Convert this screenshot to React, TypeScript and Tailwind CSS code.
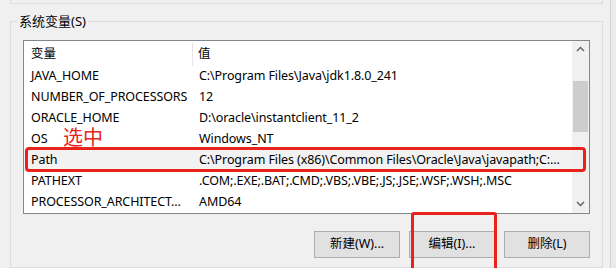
import React from "react";

const rows: [string, string][] = [
  ["JAVA_HOME", "C:\\Program Files\\Java\\jdk1.8.0_241"],
  ["NUMBER_OF_PROCESSORS", "12"],
  ["ORACLE_HOME", "D:\\oracle\\instantclient_11_2"],
  ["OS", "Windows_NT"],
  ["Path", "C:\\Program Files (x86)\\Common Files\\Oracle\\Java\\javapath;C:..."],
  ["PATHEXT", ".COM;.EXE;.BAT;.CMD;.VBS;.VBE;.JS;.JSE;.WSF;.WSH;.MSC"],
  ["PROCESSOR_ARCHITECT...", "AMD64"],
];

function Chevron({ up }: { up: boolean }) {
  return (
    <svg width="9" height="6" viewBox="0 0 9 6">
      <path
        d={up ? "M1 5 L4.5 1.5 L8 5" : "M1 1 L4.5 4.5 L8 1"}
        fill="none"
        stroke="#606060"
        strokeWidth="1.4"
      />
    </svg>
  );
}

export default function App() {
  return (
    <div
      className="relative w-[616px] h-[268px] overflow-hidden bg-[#f0f0f0] flex text-black"
      style={{ fontFamily: '"Noto Sans", "Noto Sans CJK SC", sans-serif' }}
    >
      <div className="w-[603px] flex flex-col shrink-0">
        <div className="ml-[10px] w-[593px] h-[4px] border-x border-b border-[#dcdcdc]" />
        <fieldset className="ml-[10px] mt-[9px] w-[593px] h-[300px] border border-[#dcdcdc] px-[12px] m-0 min-w-0">
          <legend className="ml-[-6px] px-[2px] text-[13px] leading-[17px]">
            系统变量(S)
          </legend>
          <div className="mt-[10px] w-[567px] h-[174px] border border-[#828790] bg-white flex">
            <div className="flex-1 flex flex-col text-[12.5px] tracking-[-0.1px]">
              <div className="h-[25px] flex pt-[2px]">
                <div className="w-[169px] pl-[7px] flex items-center border-r border-[#e5e5e5]">变量</div>
                <div className="flex-1 pl-[5px] flex items-center">值</div>
              </div>
              {rows.map(([k, v]) => (
                <div
                  key={k}
                  className={`h-[21px] flex items-center whitespace-nowrap pt-[1px] ${k === "Path" ? "bg-[#f2f2f2]" : ""}`}
                >
                  <div className="w-[169px] pl-[7px] overflow-hidden">{k}</div>
                  <div className="flex-1 pl-[6px] overflow-hidden">{v}</div>
                </div>
              ))}
            </div>
            <div className="w-[17px] bg-[#f0f0f0] flex flex-col">
              <div className="h-[17px] flex items-center justify-center">
                <Chevron up />
              </div>
              <div className="flex-1 flex flex-col px-[1px]">
                <div className="h-[23px]" />
                <div className="h-[51px] bg-[#cdcdcd]" />
              </div>
              <div className="h-[17px] flex items-center justify-center">
                <Chevron up={false} />
              </div>
            </div>
          </div>
          <div className="w-[567px] mt-[17px] flex justify-end gap-[9px] text-[12.5px]">
            {["新建(W)...", "编辑(I)...", "删除(L)"].map((t) => (
              <div
                key={t}
                className="w-[86px] h-[27px] border border-[#adadad] bg-[#e1e1e1] flex items-center justify-center"
              >
                {t}
              </div>
            ))}
          </div>
        </fieldset>
      </div>
      <div className="w-[7px] shrink-0" />
      <div className="w-[6px] shrink-0 border-l border-[#d4d4d4] bg-[#ebebeb]" />

      {/* annotations */}
      <div className="absolute left-[25px] top-[147px] w-[561px] h-[25px] border-[3px] border-[#e8231b] rounded-[4px]" />
      <div className="absolute left-[411px] top-[212px] w-[86px] h-[80px] border-[3px] border-[#e8231b] rounded-[3px]" />
      <div className="absolute left-[63px] top-[126px] text-[20px] leading-[24px] text-[#e8231b]">选中</div>
    </div>
  );
}
